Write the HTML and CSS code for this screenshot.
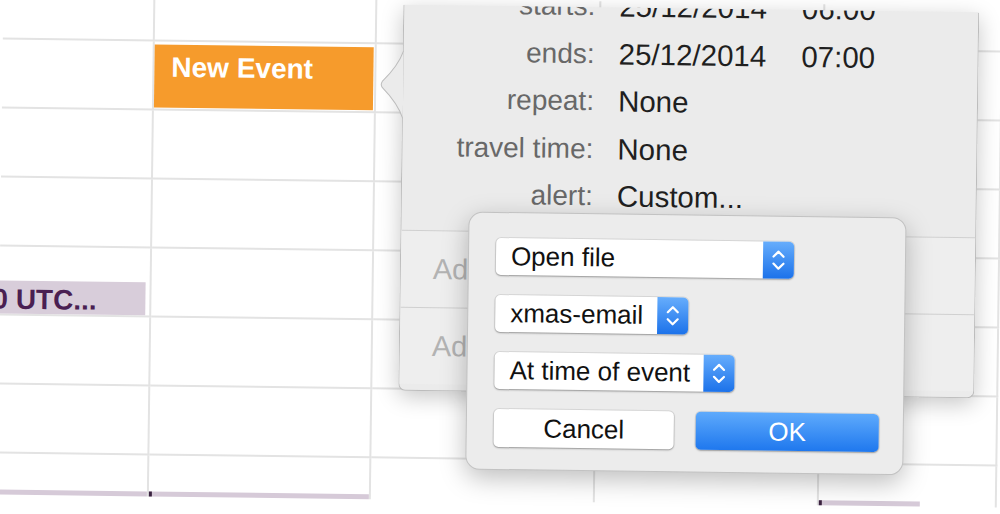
FILE: index.html
```html
<!DOCTYPE html>
<html lang="en">
<head>
  <meta charset="UTF-8">
  <title>Calendar - Custom Alert</title>
  <link rel="stylesheet" href="styles.css">
</head>
<body>

<div class="screen">

  <!-- Week grid -->
  <div class="calendar">
    <div class="cell"></div><div class="cell"></div><div class="cell"></div><div class="cell"></div><div class="cell"></div>

    <div class="cell"></div>
    <div class="cell"><div class="event event-new">New Event</div></div>
    <div class="cell"></div><div class="cell"></div><div class="cell"></div>

    <div class="cell"></div><div class="cell"></div><div class="cell"></div><div class="cell"></div><div class="cell"></div>
    <div class="cell"></div><div class="cell"></div><div class="cell"></div><div class="cell"></div><div class="cell"></div>

    <div class="cell"><div class="event event-utc">0 UTC...</div></div>
    <div class="cell"></div><div class="cell"></div><div class="cell"></div><div class="cell"></div>

    <div class="cell"></div><div class="cell"></div><div class="cell"></div><div class="cell"></div><div class="cell"></div>
    <div class="cell"></div><div class="cell"></div><div class="cell"></div><div class="cell"></div><div class="cell"></div>

    <div class="cell last"><div class="strip"></div></div>
    <div class="cell last"><div class="strip strip-start"></div></div>
    <div class="cell last"></div>
    <div class="cell last"></div>
    <div class="cell last"><div class="strip strip-start strip-short"></div></div>
  </div>

  <!-- Event popover -->
  <div class="popover">
    <div class="details">
      <div class="label">starts:</div>
      <div class="value">25/12/2014<span class="time">06:00</span></div>
      <div class="label">ends:</div>
      <div class="value">25/12/2014<span class="time">07:00</span></div>
      <div class="label">repeat:</div>
      <div class="value">None</div>
      <div class="label">travel time:</div>
      <div class="value">None</div>
      <div class="label">alert:</div>
      <div class="value">Custom...</div>
    </div>
    <div class="extra">Add Invitees</div>
    <div class="extra">Add Notes, URL, or Attachments</div>
  </div>
  <svg class="popover-arrow" width="24" height="68" viewBox="0 0 24 68">
    <path d="M24 0 C21 9 13 21 3 31 Q1 34 3 37 C13 47 21 59 24 68" fill="#ebebeb" stroke="#bcbcbc" stroke-width="1"/>
  </svg>

  <!-- Custom alert sheet -->
  <div class="sheet">
    <div class="popup popup-action">
      <span class="popup-text">Open file</span>
      <span class="stepper"><svg width="31" height="37" viewBox="0 0 31 37"><path d="M10.5 15 L15.5 10 L20.5 15 M10.5 22 L15.5 27 L20.5 22" fill="none" stroke="#fff" stroke-width="2.2" stroke-linecap="round" stroke-linejoin="round"/></svg></span>
    </div>
    <div class="popup popup-file">
      <span class="popup-text">xmas-email</span>
      <span class="stepper"><svg width="31" height="37" viewBox="0 0 31 37"><path d="M10.5 15 L15.5 10 L20.5 15 M10.5 22 L15.5 27 L20.5 22" fill="none" stroke="#fff" stroke-width="2.2" stroke-linecap="round" stroke-linejoin="round"/></svg></span>
    </div>
    <div class="popup popup-when">
      <span class="popup-text">At time of event</span>
      <span class="stepper"><svg width="31" height="37" viewBox="0 0 31 37"><path d="M10.5 15 L15.5 10 L20.5 15 M10.5 22 L15.5 27 L20.5 22" fill="none" stroke="#fff" stroke-width="2.2" stroke-linecap="round" stroke-linejoin="round"/></svg></span>
    </div>
    <div class="buttons">
      <button class="btn btn-cancel">Cancel</button>
      <button class="btn btn-ok">OK</button>
    </div>
  </div>

</div>

</body>
</html>
```

FILE: styles.css
```css
body {
  margin: 0;
  background: #fff;
  font-family: "Liberation Sans", Arial, sans-serif;
  overflow: hidden;
}
.screen {
  position: relative;
  width: 1000px;
  height: 514px;
  transform: rotate(0.75deg);
}

/* week grid */
.calendar {
  display: grid;
  grid-template-columns: 152px 222px 224px 224px 1fr;
  grid-template-rows: 46px repeat(6, 69px) 41px;
  width: 1000px;
}
.cell {
  box-sizing: border-box;
  border-right: 2px solid #e3e3e3;
  border-bottom: 2px solid #e3e3e3;
  display: flex;
}
.cell.last {
  border-bottom: none;
}
.event {
  box-sizing: border-box;
  font-weight: bold;
  white-space: nowrap;
  overflow: hidden;
}
.event-new {
  margin: 3px 1px 0 0;
  width: 100%;
  height: 63px;
  padding: 9px 0 0 17px;
  background: #f69b2c;
  color: #fff;
  font-size: 28px;
  line-height: 28px;
}
.event-utc {
  align-self: flex-end;
  margin-right: 4px;
  width: 100%;
  height: 33px;
  padding-top: 5px;
  text-indent: -7px;
  background: #d8cdda;
  color: #4a1f52;
  font-size: 28px;
  line-height: 28px;
}
.strip {
  align-self: flex-end;
  width: 100%;
  height: 5px;
  background: #d6cad8;
}
.strip-start {
  border-left: 3px solid #3b2340;
}
.strip-short {
  width: 98px;
}

/* popover */
.popover {
  position: absolute;
  left: 400px;
  top: 6px;
  width: 576px;
  height: 386px;
  box-sizing: border-box;
  background: #ebebeb;
  border: 1px solid #bcbcbc;
  border-top: none;
  border-radius: 0 0 7px 7px;
  box-shadow: 0 6px 22px rgba(0, 0, 0, 0.22);
  overflow: hidden;
}
.popover-arrow {
  position: absolute;
  left: 377px;
  top: 52px;
}
.details {
  display: grid;
  grid-template-columns: 191px auto;
  column-gap: 24px;
  margin-top: -25px;
  padding-bottom: 12px;
  line-height: 47.5px;
  white-space: nowrap;
}
.label {
  text-align: right;
  font-size: 28px;
  color: #686868;
}
.value {
  font-size: 29.5px;
  color: #1f1f1f;
}
.time {
  margin-left: 35px;
}
.extra {
  height: 77px;
  box-sizing: border-box;
  border-top: 1px solid #d0d0d0;
  padding-left: 32px;
  background: #eeeeee;
  font-size: 29px;
  line-height: 76px;
  color: #b3b3b3;
  white-space: nowrap;
}

/* custom alert sheet */
.sheet {
  position: absolute;
  left: 468px;
  top: 212px;
  width: 438px;
  height: 258px;
  box-sizing: border-box;
  padding: 25px 26px 0 27px;
  display: flex;
  flex-direction: column;
  align-items: flex-start;
  gap: 20px;
  background: #ececec;
  border: 1px solid #c2c2c2;
  border-radius: 14px;
  box-shadow: 0 8px 26px rgba(0, 0, 0, 0.26);
}
.popup {
  display: flex;
  height: 37px;
  background: #fff;
  border-radius: 5px;
  box-shadow: 0 0 0 1px rgba(0, 0, 0, 0.08), 0 1px 2px rgba(0, 0, 0, 0.3);
  font-size: 26px;
  line-height: 37px;
  color: #111;
}
.popup-text {
  flex: 1;
  padding-left: 15px;
  white-space: nowrap;
}
.stepper {
  width: 31px;
  border-radius: 0 5px 5px 0;
  background: linear-gradient(#66adfc, #1c72ea);
}
.stepper svg {
  display: block;
}
.popup-action {
  width: 298px;
}
.popup-file {
  width: 193px;
}
.popup-when {
  width: 240px;
}
.buttons {
  display: flex;
  gap: 22px;
}
.btn {
  height: 38px;
  border: none;
  border-radius: 5px;
  background: #fff;
  box-shadow: 0 0 0 1px rgba(0, 0, 0, 0.08), 0 1px 2px rgba(0, 0, 0, 0.3);
  font-family: "Liberation Sans", Arial, sans-serif;
  font-size: 26px;
  color: #111;
  padding: 0;
}
.btn-cancel {
  width: 180px;
}
.btn-ok {
  width: 183px;
  background: linear-gradient(#5eaafc, #1f78ee);
  color: #fff;
}
```
